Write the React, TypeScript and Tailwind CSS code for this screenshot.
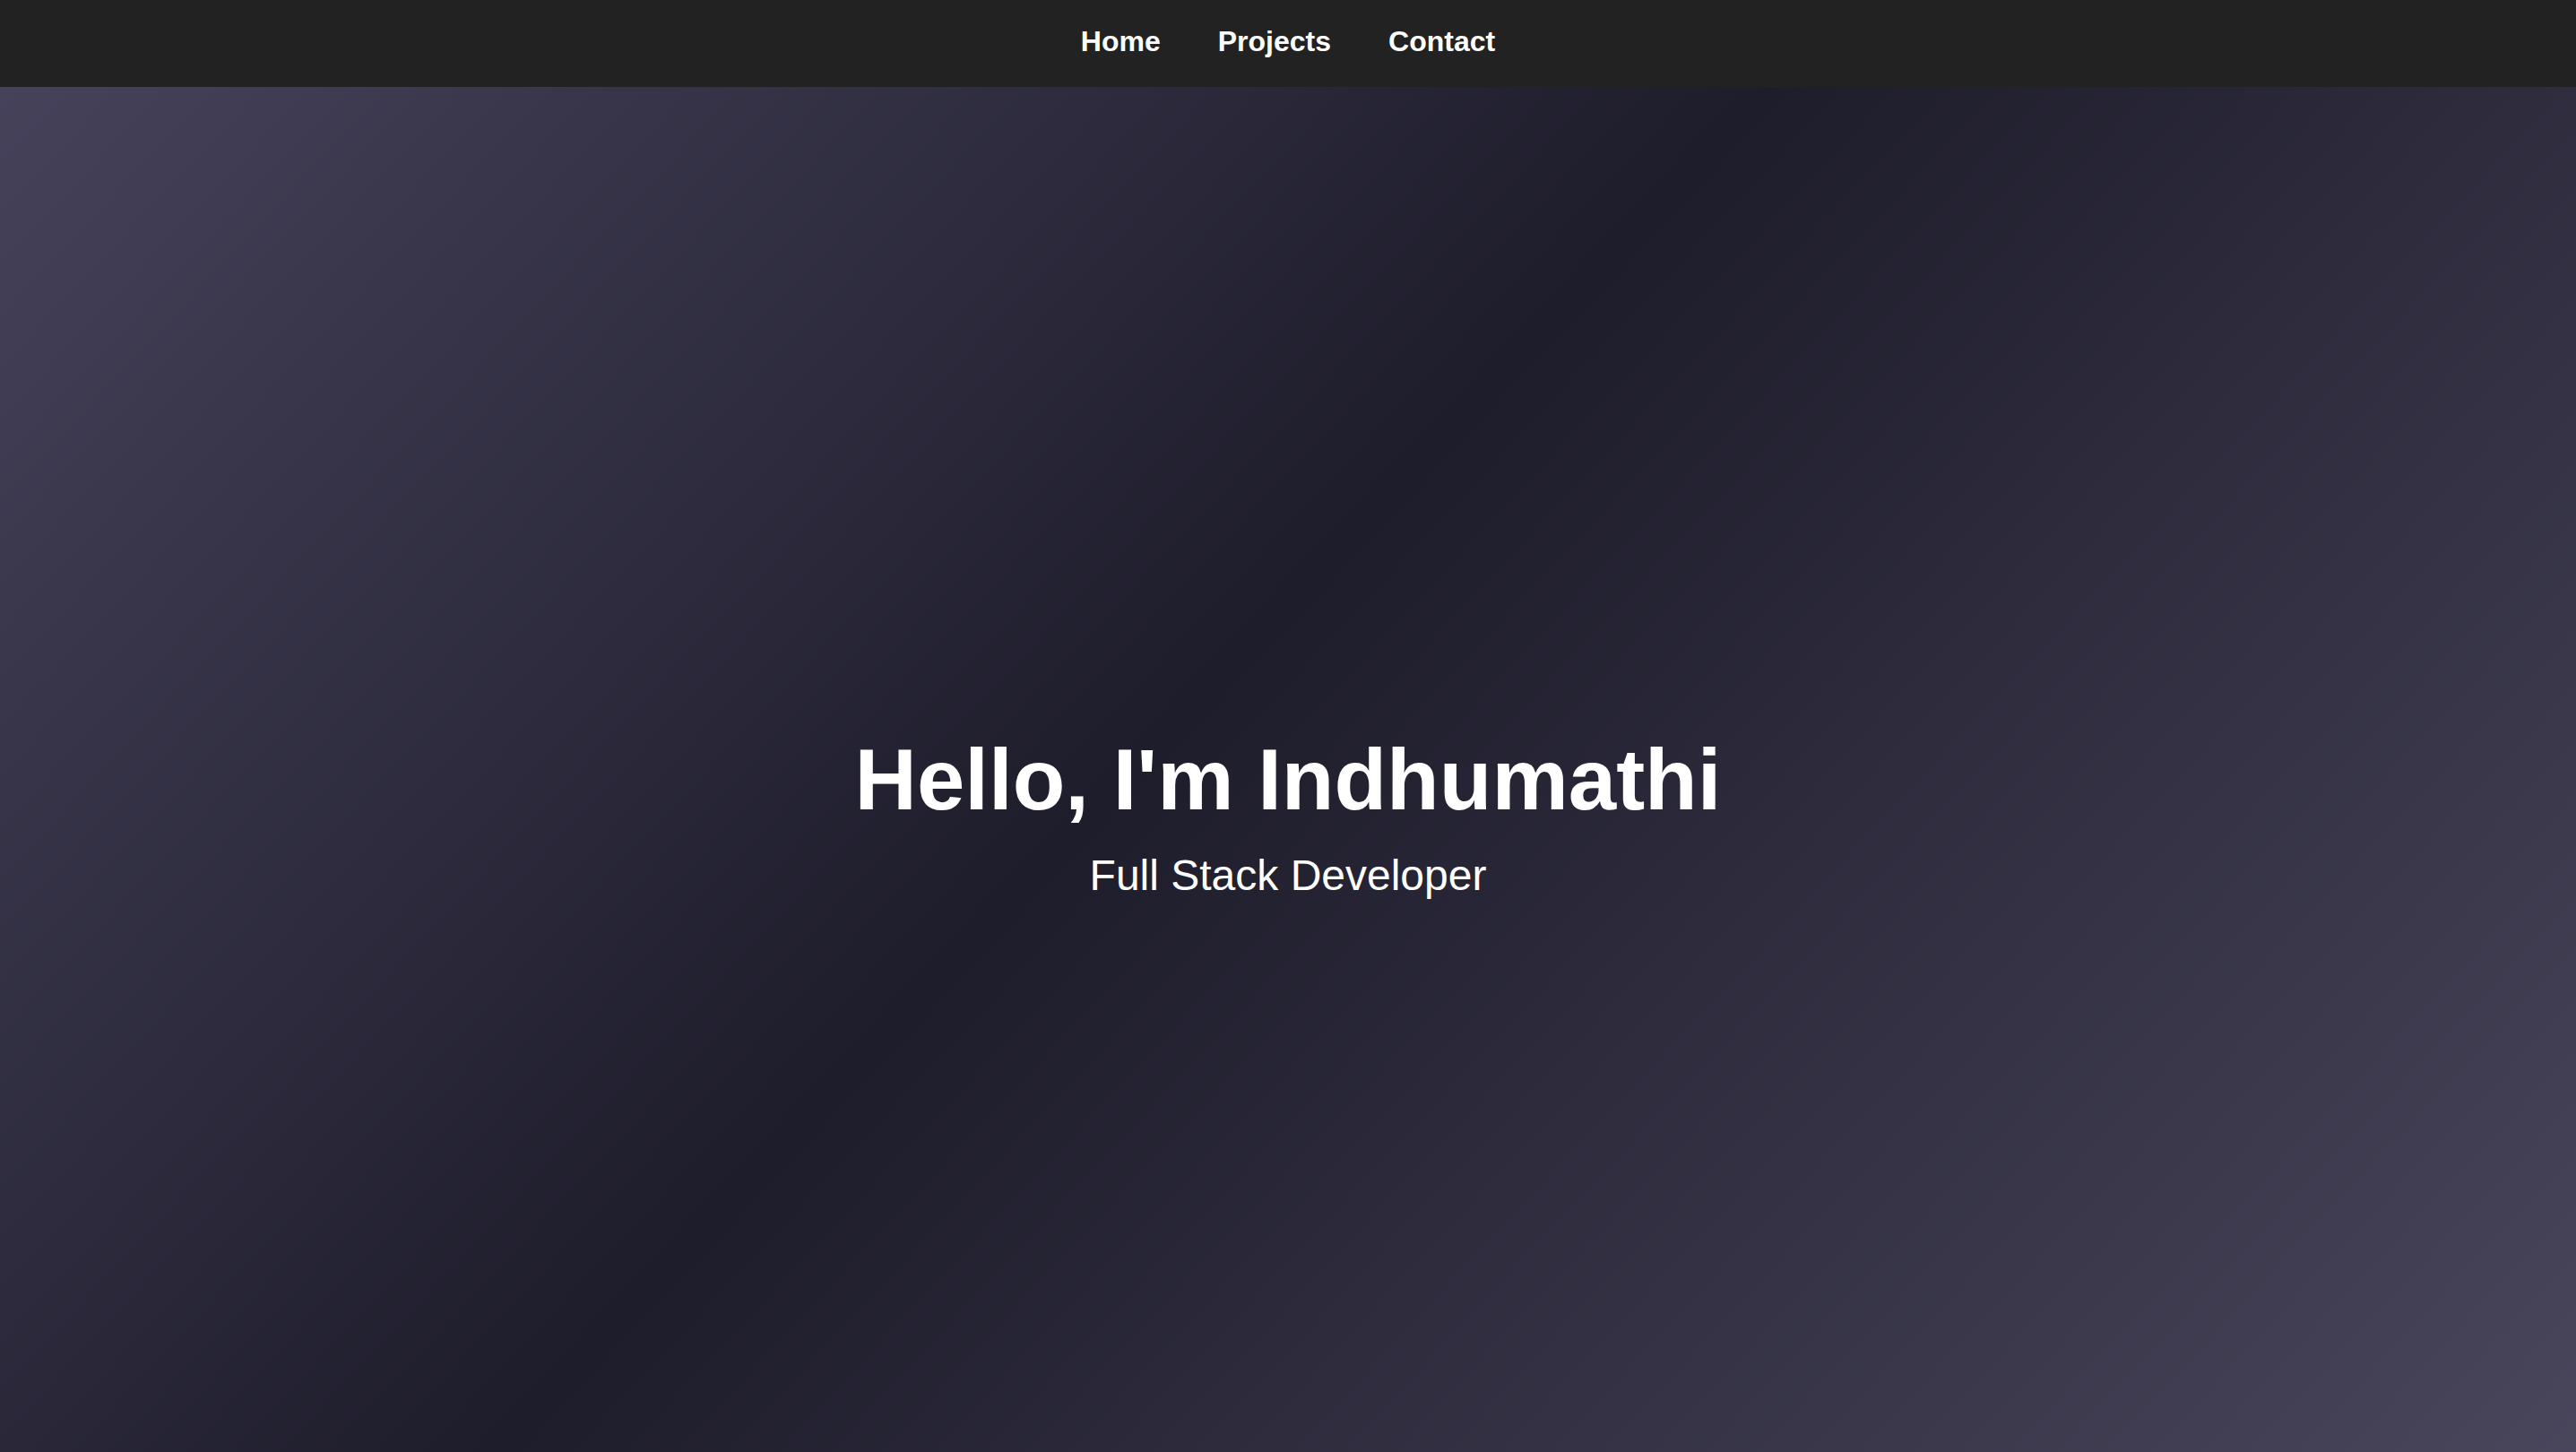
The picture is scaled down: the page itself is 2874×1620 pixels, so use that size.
export default function App() {
  return (
    <div className="min-h-screen font-['Liberation_Sans',Arial,sans-serif] text-white">
      <nav className="h-[97px] bg-[#222222] flex items-center justify-center">
        <ul className="flex items-center gap-[64px] -mt-[6px]">
          <li>
            <a href="#home" className="text-[32px] font-bold text-white">
              Home
            </a>
          </li>
          <li>
            <a href="#projects" className="text-[32px] font-bold text-white">
              Projects
            </a>
          </li>
          <li>
            <a href="#contact" className="text-[32px] font-bold text-white">
              Contact
            </a>
          </li>
        </ul>
      </nav>

      <section
        id="home"
        className="h-screen pt-[8px] flex flex-col items-center justify-center text-center bg-[linear-gradient(133deg,#46425b_0%,#1e1d2b_45%,#4b475e_100%)]"
      >
        <h1 className="text-8xl font-bold leading-none">Hello, I'm Indhumathi</h1>
        <p className="mt-[35px] text-5xl leading-none">Full Stack Developer</p>
      </section>
    </div>
  );
}
